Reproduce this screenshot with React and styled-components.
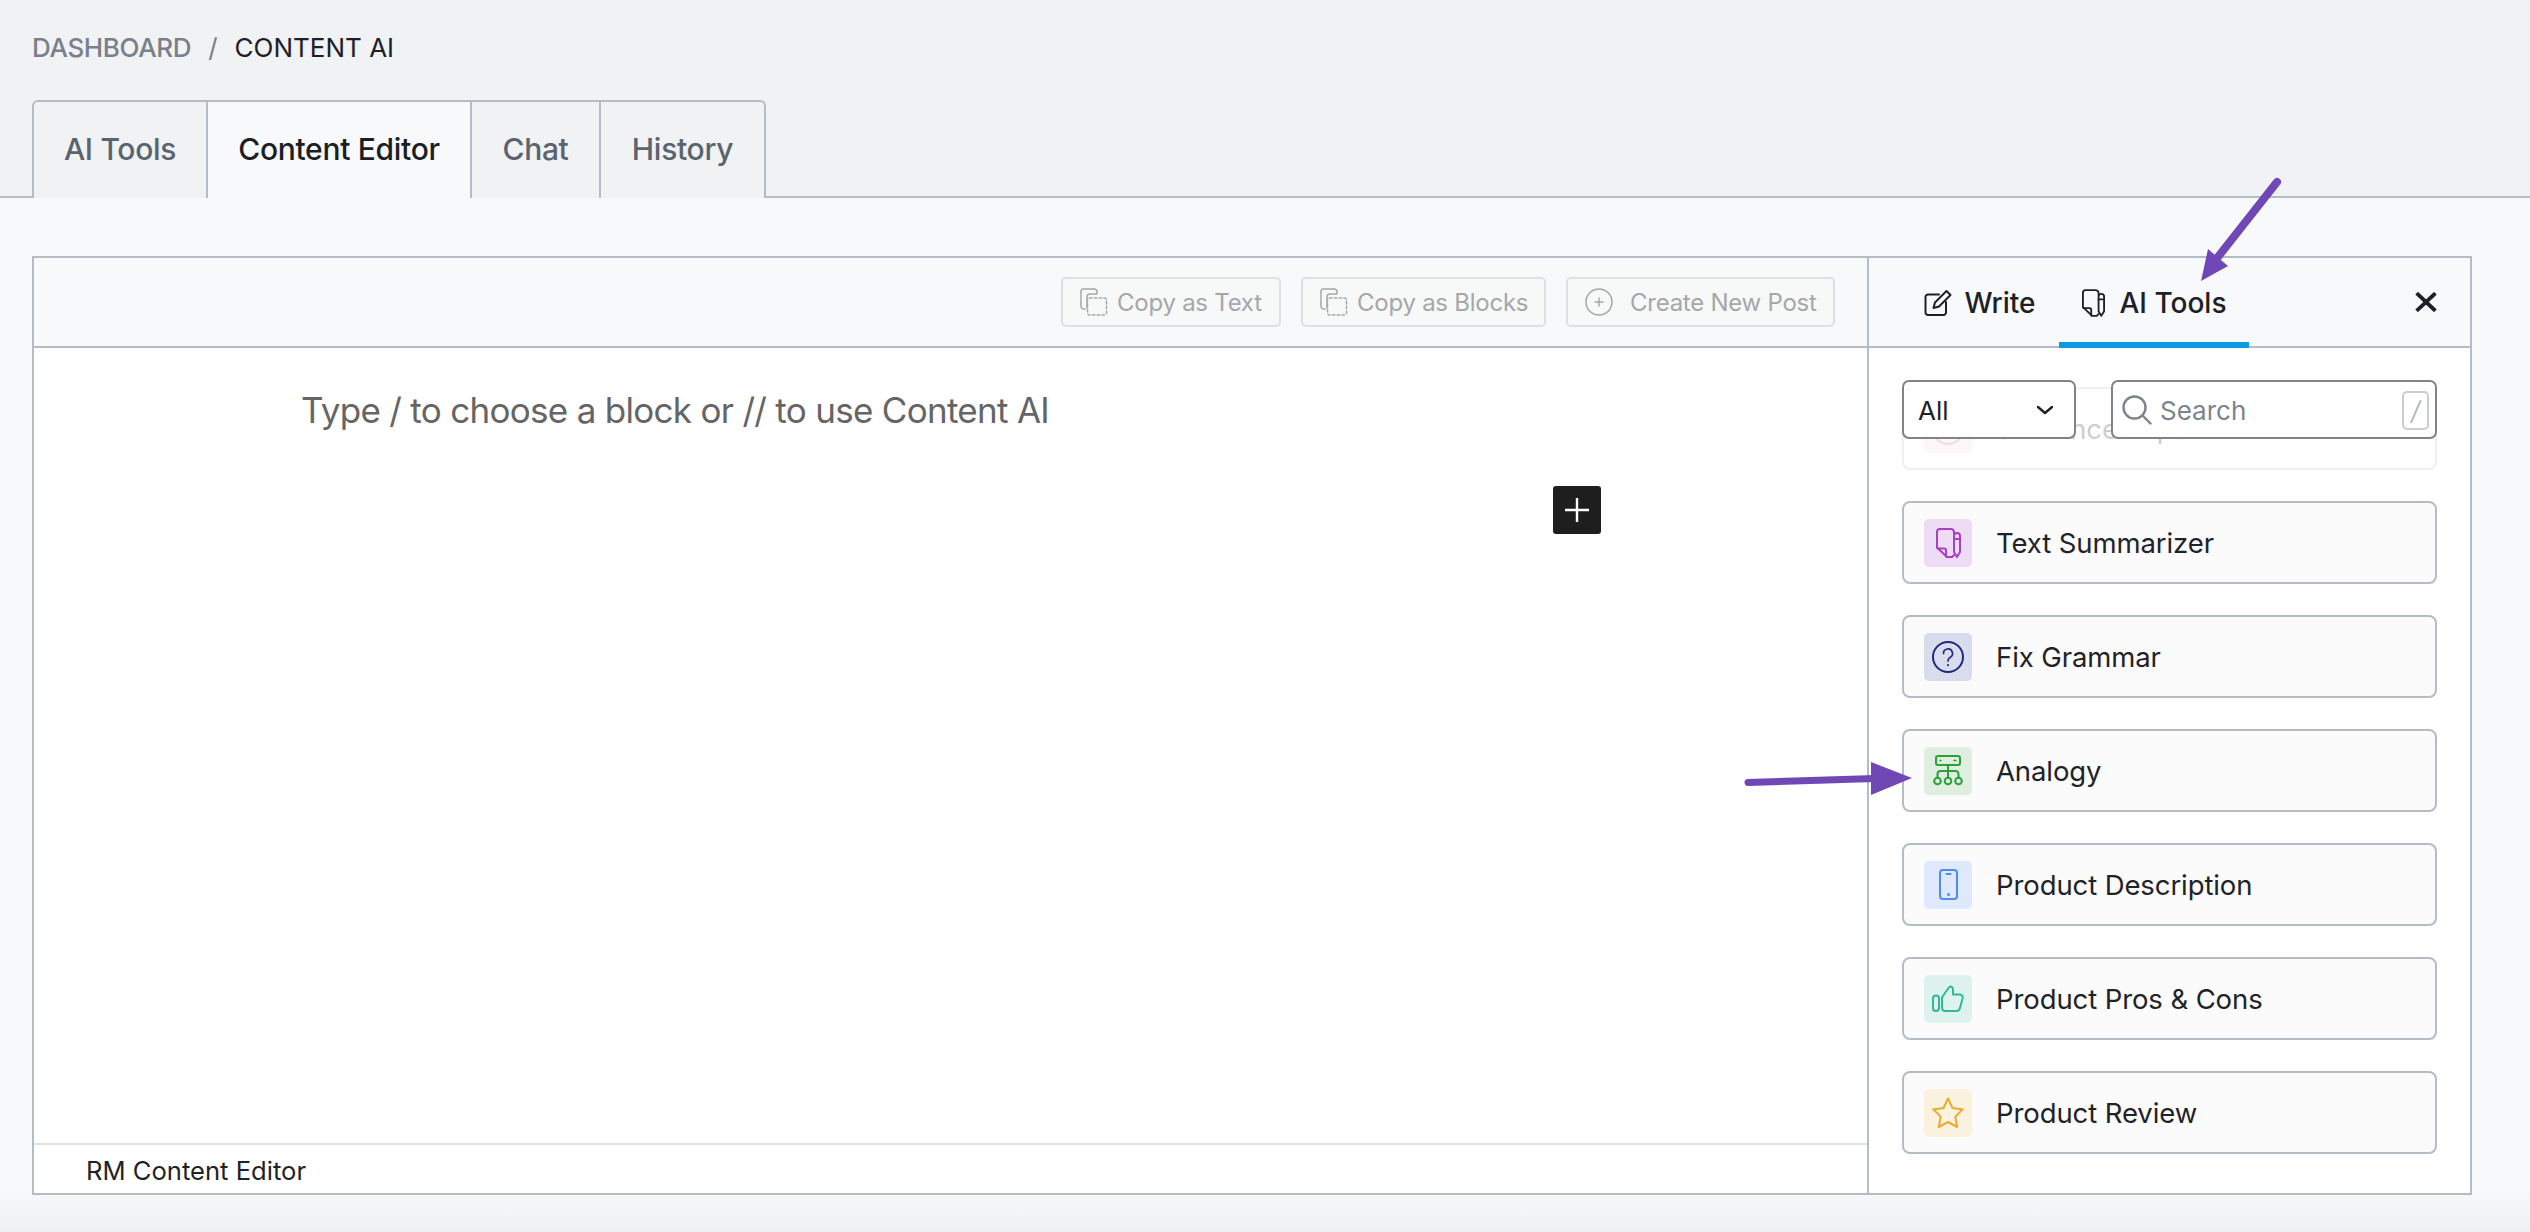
import React from "react";
import styled, { createGlobalStyle } from "styled-components";

const Global = createGlobalStyle`
  html, body {
    margin: 0;
    padding: 0;
    background: #f8f9fb;
  }
  * {
    box-sizing: border-box;
  }
`;

const Page = styled.div`
  position: relative;
  width: 2530px;
  height: 1232px;
  overflow: hidden;
  display: flex;
  flex-direction: column;
  font-family: Inter, "Liberation Sans", sans-serif;
  color: #1f2328;
`;

const Header = styled.header`
  height: 198px;
  flex: none;
  background: #f0f2f4;
  border-bottom: 2px solid #b4bcc6;
  padding: 33px 0 0 32px;
`;

const Breadcrumb = styled.nav`
  display: flex;
  align-items: center;
  height: 30px;
  font-size: 26px;
  line-height: 30px;
  color: #787f88;
`;

const Crumb = styled.span`
  color: ${(p) => (p.$current ? "#1d2127" : "#79808a")};
  font-weight: ${(p) => (p.$current ? 400 : 500)};
  letter-spacing: ${(p) => (p.$current ? "0" : "-0.35px")};
`;

const Slash = styled.span`
  margin: 0 17px;
`;

const TabBar = styled.div`
  display: flex;
  margin-top: 37px;
  height: 98px;
`;

const PageTab = styled.div`
  display: flex;
  align-items: center;
  justify-content: center;
  width: ${(p) => p.$width}px;
  margin-left: ${(p) => (p.$first ? 0 : -2)}px;
  font-size: 30px;
  font-weight: 500;
  letter-spacing: -0.3px;
  border: 2px solid #b4bcc6;
  border-bottom: 0;
  padding-bottom: 2px;
  color: ${(p) => (p.$active ? "#1b1f24" : "#5b646e")};
  background: ${(p) => (p.$active ? "#f8f9fb" : "#f0f2f4")};
  border-radius: ${(p) => (p.$first ? "6px 0 0 0" : p.$last ? "0 6px 0 0" : "0")};
  position: relative;
  z-index: ${(p) => (p.$active ? 1 : 0)};
`;

const Body = styled.main`
  flex: 1;
  padding: 58px 58px 0 32px;
  background: linear-gradient(to bottom, #f8f9fb calc(100% - 45px), #eff0f2 100%);
`;

const Panel = styled.section`
  display: grid;
  grid-template-columns: 1835px 1fr;
  width: 2440px;
  height: 939px;
  border: 2px solid #b4bcc6;
  background: #fff;
`;

const EditorColumn = styled.div`
  display: flex;
  flex-direction: column;
  min-width: 0;
  border-right: 2px solid #b4bcc6;
`;

const Toolbar = styled.div`
  display: flex;
  align-items: center;
  justify-content: flex-end;
  gap: 20px;
  height: 90px;
  flex: none;
  padding-right: 32px;
  background: #f8f9fa;
  border-bottom: 2px solid #b4bcc6;
`;

const ToolbarButton = styled.div`
  display: flex;
  align-items: center;
  gap: ${(p) => p.$gap}px;
  width: ${(p) => p.$width}px;
  height: 50px;
  padding-left: 17px;
  border: 2px solid #dde0e2;
  border-radius: 5px;
  background: #f7f8f8;
  color: #a5a7aa;
  font-size: 24px;
  letter-spacing: -0.25px;
  white-space: nowrap;
`;

const Canvas = styled.div`
  position: relative;
  flex: 1;
  padding: 40px 0 0 267px;
  font-size: 35px;
  letter-spacing: -0.7px;
  line-height: 44px;
  color: #656565;
`;

const Inserter = styled.div`
  position: absolute;
  left: 1519px;
  top: 138px;
  width: 48px;
  height: 48px;
  display: flex;
  align-items: center;
  justify-content: center;
  border-radius: 3px;
  background: #1e1e1e;
`;

const EditorFooter = styled.div`
  display: flex;
  align-items: center;
  height: 50px;
  flex: none;
  padding: 2px 0 0 52px;
  border-top: 2px solid #dfe1e4;
  font-size: 25.6px;
  color: #1f2328;
`;

const Sidebar = styled.aside`
  display: flex;
  flex-direction: column;
  min-width: 0;
`;

const SidebarTabs = styled.div`
  display: flex;
  align-items: stretch;
  height: 90px;
  flex: none;
  padding-left: 20px;
  background: #f8f9fa;
  border-bottom: 2px solid #b4bcc6;
`;

const SidebarTab = styled.div`
  display: flex;
  align-items: center;
  justify-content: center;
  gap: ${(p) => (p.$active ? 15 : 12)}px;
  width: ${(p) => p.$width}px;
  margin-bottom: -2px;
  padding: 6px 0 0 ${(p) => p.$shift || 0}px;
  font-size: 28px;
  font-weight: 500;
  color: #1d2127;
  border-bottom: 6px solid ${(p) => (p.$active ? "#0a9ce0" : "transparent")};
`;

const CloseButton = styled.div`
  display: flex;
  align-items: center;
  margin-left: auto;
  padding-right: 33px;
`;

const SidebarContent = styled.div`
  position: relative;
  flex: 1;
  overflow: hidden;
`;

const FilterRow = styled.div`
  position: absolute;
  left: 33px;
  right: 33px;
  top: 32px;
  display: flex;
  justify-content: space-between;
  z-index: 1;
`;

const SelectBox = styled.div`
  display: flex;
  align-items: center;
  justify-content: space-between;
  width: 174px;
  height: 59px;
  padding: 1px 20px 0 14px;
  background: #fff;
  border: 2px solid #7f848a;
  border-radius: 7px;
  font-size: 26px;
  color: #1d2127;
`;

const SearchBox = styled.div`
  display: flex;
  align-items: center;
  gap: 8px;
  width: 326px;
  height: 59px;
  padding: 1px 6px 0 9px;
  background: #fff;
  border: 2px solid #7f848a;
  border-radius: 7px;
  font-size: 26px;
  color: #7d848c;
`;

const SlashKey = styled.span`
  display: flex;
  align-items: center;
  justify-content: center;
  width: 27px;
  height: 39px;
  margin-left: auto;
  border: 2px solid #c9cdd2;
  border-radius: 5px;
  font-size: 26px;
  font-style: italic;
  font-weight: 300;
  color: #a6abb1;
`;

const ToolList = styled.div`
  display: flex;
  flex-direction: column;
  gap: 31px;
  padding: 39px 33px 0;
`;

const ToolCard = styled.div`
  display: flex;
  align-items: center;
  gap: 24px;
  height: 83px;
  padding-left: 20px;
  background: #fbfbfc;
  border: 2px solid #b4bcc6;
  border-radius: 8px;
  font-size: 27.5px;
  letter-spacing: -0.1px;
  color: #1f2328;
  opacity: ${(p) => (p.$faded ? 0.22 : 1)};
`;

const ToolIcon = styled.span`
  display: flex;
  align-items: center;
  justify-content: center;
  width: 48px;
  height: 48px;
  flex: none;
  border-radius: 5px;
  background: ${(p) => p.$bg};
  color: ${(p) => p.$color};
`;

const Annotations = styled.svg`
  position: absolute;
  inset: 0;
  pointer-events: none;
  z-index: 2;
`;

const line = {
  fill: "none",
  stroke: "currentColor",
  strokeLinecap: "round",
  strokeLinejoin: "round",
};

const CopyIcon = () => (
  <svg width="28" height="28" viewBox="0 0 28 28" {...line} strokeWidth="1.5">
    <path d="M5 21H3.5A2.5 2.5 0 0 1 1 18.5V3.5A2.5 2.5 0 0 1 3.5 1H14a3 3 0 0 1 3 3V5" />
    <path d="M7 20V9a3 3 0 0 1 3-3h7" />
    <rect x="7.5" y="10" width="19" height="17" rx="2" strokeDasharray="2.6 2.2" />
  </svg>
);

const PlusCircleIcon = () => (
  <svg width="28" height="28" viewBox="0 0 28 28" {...line} strokeWidth="1.5">
    <circle cx="14" cy="14" r="13" />
    <path d="M14 10v8M10 14h8" />
  </svg>
);

const PlusIcon = () => (
  <svg width="26" height="26" viewBox="0 0 26 26" fill="none" stroke="#fff" strokeWidth="2.4">
    <path d="M13 1v24M1 13h24" />
  </svg>
);

const WriteIcon = () => (
  <svg width="28" height="28" viewBox="0 0 28 28" {...line} strokeWidth="2">
    <path d="M22 13v10.500a2.500 2.500 0 0 1-2.500 2.500H4a2.500 2.500 0 0 1-2.500-2.500V8A2.500 2.500 0 0 1 4 5.500h11" />
    <path d="M9.500 19l1.500-5.500L22.500 2l4 4L15 17.500z" />
  </svg>
);

const NoteIcon = ({ width = 25, height = 30, strokeWidth = 2 }) => (
  <svg width={width} height={height} viewBox="0 0 25 30" {...line} strokeWidth={strokeWidth}>
    <path d="M18 6V4A3.300 3.300 0 0 0 14.700 1H3.700A3 3 0 0 0 1 3.800V19.500L11 29H16L18 27" />
    <path d="M1.500 20.500H8.500A1.500 1.500 0 0 1 10 22V28.500" />
    <path d="M18 8A3 3 0 0 1 24 8V24L21 29L18 24Z" />
    <path d="M18 11H24" />
  </svg>
);

const CloseIcon = () => (
  <svg width="22" height="20" viewBox="0 0 22 20" fill="none" stroke="#1d2127" strokeWidth="3.800" strokeLinecap="square">
    <path d="M3 2.500l16 15M19 2.500l-16 15" />
  </svg>
);

const ChevronIcon = () => (
  <svg width="18" height="12" viewBox="0 0 18 12" fill="none" stroke="#1d2127" strokeWidth="2.400" strokeLinecap="round" strokeLinejoin="round">
    <path d="M2 3l7 6 7-6" />
  </svg>
);

const SearchIcon = () => (
  <svg width="30" height="30" viewBox="0 0 30 30" {...line} strokeWidth="2.400">
    <circle cx="12.500" cy="12.500" r="11" />
    <path d="M20.500 20.500L28.500 28.500" />
  </svg>
);

const QuestionIcon = () => (
  <svg width="32" height="32" viewBox="0 0 32 32" {...line} strokeWidth="2">
    <circle cx="16" cy="16" r="15" />
    <path d="M11.500 12.500a4.500 4.500 0 1 1 6.800 3.800c-1.600 1-2.300 1.800-2.300 3.700" strokeWidth="1.700" />
    <path d="M16 24v.3" />
  </svg>
);

const SitemapIcon = () => (
  <svg width="32" height="31" viewBox="0 0 32 31" {...line} strokeWidth="2">
    <rect x="4" y="1" width="24" height="9" rx="2" />
    <path d="M8 5.500h1M22 5.500h2" strokeWidth="1.400" />
    <path d="M16 10v13M5.500 23v-4a3 3 0 0 1 3-3h15a3 3 0 0 1 3 3v4" />
    <circle cx="5.500" cy="26" r="3.300" />
    <circle cx="16" cy="26" r="3.300" />
    <circle cx="26.500" cy="26" r="3.300" />
  </svg>
);

const PhoneIcon = () => (
  <svg width="19" height="31" viewBox="0 0 19 31" {...line} strokeWidth="2">
    <rect x="1" y="1" width="17" height="29" rx="3" />
    <path d="M7.500 5h4" />
    <path d="M9.500 25.500v.2" strokeWidth="2.800" />
  </svg>
);

const ThumbIcon = () => (
  <svg width="32" height="27" viewBox="0 0 32 27" {...line} strokeWidth="2">
    <rect x="1" y="10.500" width="6" height="15.500" rx="3" />
    <path d="M10 12.500L16.500 3c1.500-2.300 4.500-1.500 4.500 1.200V9.500h6.300c2.500 0 3.900 1.600 3.300 4L27.800 23.500c-.5 1.700-1.800 2.500-3.300 2.500H13.500c-2.200 0-3.500-1.400-3.500-3.500z" />
  </svg>
);

const StarIcon = () => (
  <svg width="32" height="32" viewBox="0 0 32 32" {...line} strokeWidth="2">
    <path d="M16 1.500l4.500 9.500 10.300 1.400-7.500 7.200 1.900 10.400L16 25l-9.200 5 1.900-10.400-7.500-7.200L11.500 11z" />
  </svg>
);

const tools = [
  { label: "Sentence Expander", bg: "#fbdde6", color: "#e0577f", icon: <QuestionIcon />, faded: true },
  { label: "Text Summarizer", bg: "#eddcf3", color: "#a83fc4", icon: <NoteIcon /> },
  { label: "Fix Grammar", bg: "#d9dcec", color: "#1f2a7c", icon: <QuestionIcon /> },
  { label: "Analogy", bg: "#dfeedf", color: "#2a9f3a", icon: <SitemapIcon /> },
  { label: "Product Description", bg: "#dfe9fd", color: "#4f8bf0", icon: <PhoneIcon /> },
  { label: "Product Pros & Cons", bg: "#dff3ee", color: "#2fb89a", icon: <ThumbIcon /> },
  { label: "Product Review", bg: "#fbf1df", color: "#e8ac2e", icon: <StarIcon /> },
];

export default function App() {
  return (
    <Page>
      <Global />
      <Header>
        <Breadcrumb>
          <Crumb>DASHBOARD</Crumb>
          <Slash>/</Slash>
          <Crumb $current>CONTENT AI</Crumb>
        </Breadcrumb>
        <TabBar>
          <PageTab $first $width={176}>AI Tools</PageTab>
          <PageTab $active $width={266}>Content Editor</PageTab>
          <PageTab $width={131}>Chat</PageTab>
          <PageTab $last $width={167}>History</PageTab>
        </TabBar>
      </Header>
      <Body>
        <Panel>
          <EditorColumn>
            <Toolbar>
              <ToolbarButton $width={220} $gap={9}><CopyIcon />Copy as Text</ToolbarButton>
              <ToolbarButton $width={245} $gap={9}><CopyIcon />Copy as Blocks</ToolbarButton>
              <ToolbarButton $width={269} $gap={17}><PlusCircleIcon />Create New Post</ToolbarButton>
            </Toolbar>
            <Canvas>
              Type / to choose a block or // to use Content AI
              <Inserter><PlusIcon /></Inserter>
            </Canvas>
            <EditorFooter>RM Content Editor</EditorFooter>
          </EditorColumn>
          <Sidebar>
            <SidebarTabs>
              <SidebarTab $width={170} $shift={12}><WriteIcon />Write</SidebarTab>
              <SidebarTab $active $width={190}><NoteIcon width={23} height={28} strokeWidth={2} />AI Tools</SidebarTab>
              <CloseButton><CloseIcon /></CloseButton>
            </SidebarTabs>
            <SidebarContent>
              <FilterRow>
                <SelectBox>All<ChevronIcon /></SelectBox>
                <SearchBox><SearchIcon />Search<SlashKey>/</SlashKey></SearchBox>
              </FilterRow>
              <ToolList>
                {tools.map((tool) => (
                  <ToolCard key={tool.label} $faded={tool.faded}>
                    <ToolIcon $bg={tool.bg} $color={tool.color}>{tool.icon}</ToolIcon>
                    {tool.label}
                  </ToolCard>
                ))}
              </ToolList>
            </SidebarContent>
          </Sidebar>
        </Panel>
      </Body>
      <Annotations width="2530" height="1232" viewBox="0 0 2530 1232">
        <path d="M2277 182L2214 262" stroke="#7048b6" strokeWidth="8" strokeLinecap="round" />
        <path d="M2201 281L2208 249L2228 266Z" fill="#7048b6" />
        <path d="M1748 782.500L1875 778.500" stroke="#7048b6" strokeWidth="7" strokeLinecap="round" />
        <path d="M1912 778L1871 762L1871 795Z" fill="#7048b6" />
      </Annotations>
    </Page>
  );
}
